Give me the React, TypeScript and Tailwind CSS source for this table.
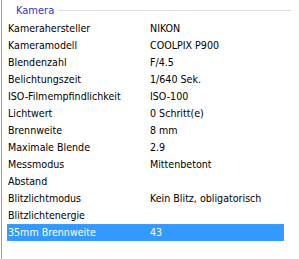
import React from "react";

const rows: [string, string][] = [
  ["Kamerahersteller", "NIKON"],
  ["Kameramodell", "COOLPIX P900"],
  ["Blendenzahl", "F/4.5"],
  ["Belichtungszeit", "1/640 Sek."],
  ["ISO-Filmempfindlichkeit", "ISO-100"],
  ["Lichtwert", "0 Schritt(e)"],
  ["Brennweite", "8 mm"],
  ["Maximale Blende", "2.9"],
  ["Messmodus", "Mittenbetont"],
  ["Abstand", ""],
  ["Blitzlichtmodus", "Kein Blitz, obligatorisch"],
  ["Blitzlichtenergie", ""],
  ["35mm Brennweite", "43"],
];

export default function App() {
  return (
    <div
      className="w-[299px] h-[259px] bg-white overflow-hidden text-[10.6px] text-black font-stretch-condensed"
      style={{ fontFamily: '"DejaVu Sans Condensed", "DejaVu Sans", sans-serif' }}
    >
      <div className="ml-[1px] h-full border-l border-[#a0a0a0] flex flex-col">
        <div className="h-[20px] flex items-center pl-[14px] pr-[8px]">
          <span className="text-[#3434c8] text-[11px] leading-none">Kamera</span>
          <div className="flex-1 ml-[5px] h-px bg-[#d5dde8]" />
        </div>
        <div className="flex flex-col pl-[5px] pr-[15px]">
          {rows.map(([k, v], i) => {
            const sel = i === rows.length - 1;
            return (
              <div
                key={k}
                className={
                  "h-[17px] flex items-center " +
                  (sel
                    ? "bg-[#3399ff] text-white border border-dotted border-[#e07a20]"
                    : "border border-transparent")
                }
              >
                <div className="w-[142px] whitespace-nowrap">{k}</div>
                <div className="whitespace-nowrap">{v}</div>
              </div>
            );
          })}
        </div>
      </div>
    </div>
  );
}
